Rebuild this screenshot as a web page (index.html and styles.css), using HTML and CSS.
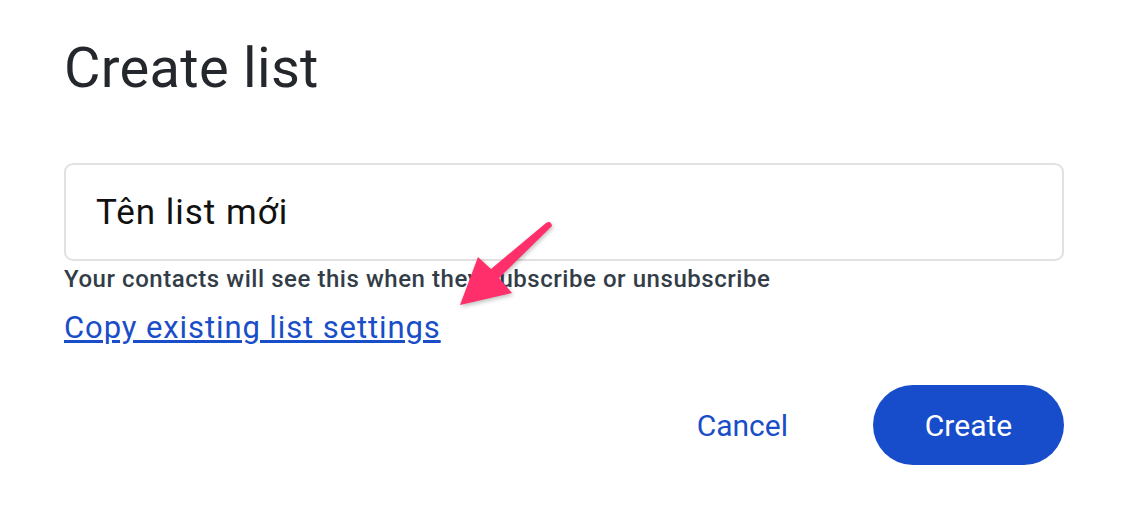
FILE: index.html
```html
<!DOCTYPE html>
<html lang="en">
<head>
    <meta charset="UTF-8">
    <title>Create list</title>
    <link rel="stylesheet" href="styles.css">
</head>
<body>

<div class="dialog">
    <h1 class="title">Create list</h1>

    <div class="field">
        <div class="field-box">Tên list mới</div>
        <p class="hint">Your contacts will see this when they subscribe or unsubscribe</p>
    </div>

    <a class="copy-link" href="#">Copy existing list settings</a>

    <div class="actions">
        <button class="btn-text">Cancel</button>
        <button class="btn-primary">Create</button>
    </div>

    <!-- annotation arrow -->
    <svg class="arrow" width="130" height="100" viewBox="0 0 130 100">
        <path d="M20,90 L38,42 L51,54 L106,8 Q111,5 112,11 L59,63 L72,78 Z" fill="#ff2f6b"/>
    </svg>
</div>

</body>
</html>
```

FILE: styles.css
```css
body {
    margin: 0;
    background-color: #fff;
    font-family: Roboto, "Noto Sans", Arial, sans-serif;
}
.dialog {
    position: relative;
    padding: 28px 68px 0 64px;
    width: 1000px;
    height: 484px;
}
.title {
    margin: 0;
    font-size: 56px;
    font-weight: 400;
    line-height: 80px;
    color: #24272b;
    letter-spacing: 0.3px;
}
.field {
    margin-top: 55px;
}
.field-box {
    height: 94px;
    border: 2px solid #e1e1e1;
    border-radius: 9px;
    padding: 0 30px;
    display: flex;
    align-items: center;
    font-size: 35px;
    letter-spacing: 1px;
    color: #111;
}
.hint {
    margin: 4px 0 0;
    font-size: 24px;
    font-weight: 500;
    line-height: 28px;
    letter-spacing: 0.55px;
    color: #333d48;
}
.copy-link {
    display: inline-block;
    margin-top: 16px;
    font-size: 31px;
    line-height: 38px;
    letter-spacing: 0.9px;
    color: #1a4dc8;
}
.actions {
    display: flex;
    justify-content: flex-end;
    align-items: center;
    gap: 85px;
    margin-top: 38px;
}
.btn-text {
    border: none;
    background: none;
    padding: 0;
    font-family: inherit;
    font-size: 30px;
    color: #1a4dc8;
    cursor: pointer;
}
.btn-primary {
    width: 191px;
    height: 80px;
    border: none;
    border-radius: 40px;
    background-color: #174dcb;
    color: #fff;
    font-family: inherit;
    font-size: 30px;
    cursor: pointer;
}
.arrow {
    position: absolute;
    left: 440px;
    top: 215px;
    filter: drop-shadow(1px 2px 2px rgba(0, 0, 0, 0.25));
}
```
